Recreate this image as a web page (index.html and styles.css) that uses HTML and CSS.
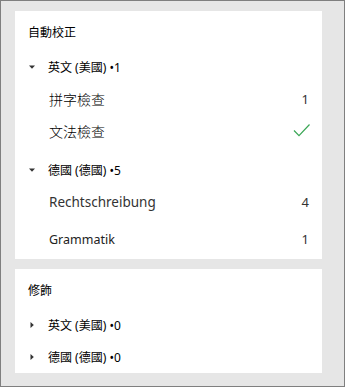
FILE: index.html
```html
<!DOCTYPE html>
<html lang="zh-Hant">
<head>
    <meta charset="UTF-8">
    <meta name="viewport" content="width=device-width, initial-scale=1.0">
    <title>校訂</title>
    <link rel="stylesheet" href="styles.css">
</head>
<body>
    <div class="pane">
        <section class="card card-editor">
            <h2 class="card-title">自動校正</h2>

            <div class="lang-row">
                <svg class="caret" width="20" height="10" viewBox="0 0 20 10"><path d="M1 3.5h6l-3 3.2z" fill="#333"/></svg>
                <span>英文 (美國) •1</span>
            </div>
            <div class="item-row">
                <span class="item-name cjk">拼字檢查</span>
                <span class="count">1</span>
            </div>
            <div class="item-row">
                <span class="item-name cjk">文法檢查</span>
                <svg class="check" width="17" height="14" viewBox="0 0 17 14"><path d="M1 7.5l5 5.2L16.5 1.5" fill="none" stroke="#3aa655" stroke-width="1.2"/></svg>
            </div>

            <div class="lang-row lang-second">
                <svg class="caret" width="20" height="10" viewBox="0 0 20 10"><path d="M1 3.5h6l-3 3.2z" fill="#333"/></svg>
                <span>德國 (德國) •5</span>
            </div>
            <div class="item-row">
                <span class="item-name latin">Rechtschreibung</span>
                <span class="count">4</span>
            </div>
            <div class="item-row item-last">
                <span class="item-name latin small">Grammatik</span>
                <span class="count">1</span>
            </div>
        </section>

        <section class="card card-format">
            <h2 class="card-title">修飾</h2>

            <div class="lang-row">
                <svg class="caret" width="20" height="10" viewBox="0 0 20 10"><path d="M2.5 2l3.3 3-3.3 3z" fill="#333"/></svg>
                <span>英文 (美國) •0</span>
            </div>
            <div class="lang-row lang-tight">
                <svg class="caret" width="20" height="10" viewBox="0 0 20 10"><path d="M2.5 2l3.3 3-3.3 3z" fill="#333"/></svg>
                <span>德國 (德國) •0</span>
            </div>
        </section>
    </div>
</body>
</html>
```

FILE: styles.css
```css
* {
    box-sizing: border-box;
}

body {
    margin: 0;
    font-family: "Noto Sans", "Noto Sans CJK TC", sans-serif;
    color: #000;
}

.pane {
    width: 345px;
    height: 387px;
    background: #e6e6e6;
    border: 1px solid #7f7f7f;
    padding: 10px 22px 0 14px;
    display: flex;
    flex-direction: column;
    gap: 10px;
}

.card {
    background: #fff;
    padding: 0 13px;
}

.card-editor {
    height: 248px;
}

.card-format {
    height: 104px;
}

.card-title {
    margin: 0;
    padding-top: 13px;
    height: 40px;
    font-size: 12px;
    line-height: 16px;
    font-weight: normal;
    font-family: "Noto Sans CJK TC", sans-serif;
}

.lang-row {
    height: 32px;
    display: flex;
    align-items: center;
    font-size: 12px;
    font-family: "Noto Sans", "Noto Sans CJK TC", sans-serif;
}

.lang-row .caret {
    flex: none;
}

.lang-second {
    margin-top: 7px;
}

.lang-tight {
    height: 31px;
}

.item-row {
    height: 32px;
    display: flex;
    align-items: center;
    justify-content: space-between;
    padding-left: 21px;
}

.item-last {
    margin-top: 5px;
}

.item-name {
    font-size: 14px;
}

.cjk {
    font-family: "Noto Sans CJK TC", sans-serif;
    font-weight: 300;
}

.latin {
    font-family: "Noto Sans", sans-serif;
    font-size: 13.5px;
    color: #333;
}

.latin.small {
    font-size: 12.5px;
    color: #222;
}

.count {
    font-size: 13px;
    color: #333;
}

.check {
    margin-right: -1px;
    margin-top: -2px;
}
```
